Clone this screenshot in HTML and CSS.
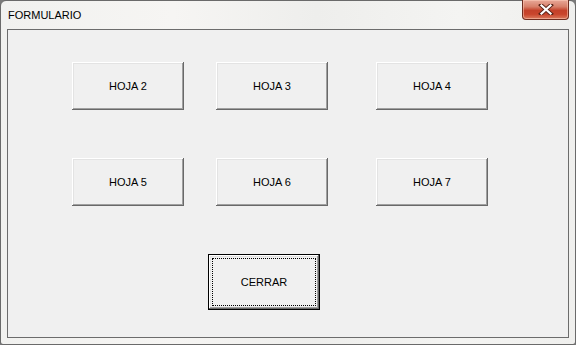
FILE: index.html
```html
<!DOCTYPE html>
<html lang="es">

<head>
    <meta charset="UTF-8">
    <meta name="viewport" content="width=device-width, initial-scale=1.0">
    <title>FORMULARIO</title>
    <link rel="stylesheet" href="styles.css">
</head>

<body>

    <div class="window">
        <div class="title-bar">
            <span class="title">FORMULARIO</span>
            <button class="close-btn" title="Cerrar">
                <svg width="16" height="11" viewBox="0 0 16 11">
                    <path d="M3 1 L13 10 M13 1 L3 10" stroke="#5a2418" stroke-width="4" stroke-linecap="square" />
                    <path d="M3.5 1.5 L12.5 9.5 M12.5 1.5 L3.5 9.5" stroke="#ffffff" stroke-width="2.2" stroke-linecap="square" />
                </svg>
            </button>
        </div>

        <div class="client">
            <div class="btn-row">
                <button class="sheet-btn">HOJA 2</button>
                <button class="sheet-btn col-2">HOJA 3</button>
                <button class="sheet-btn col-3">HOJA 4</button>
            </div>
            <div class="btn-row">
                <button class="sheet-btn">HOJA 5</button>
                <button class="sheet-btn col-2">HOJA 6</button>
                <button class="sheet-btn col-3">HOJA 7</button>
            </div>
            <div class="close-row">
                <button class="sheet-btn default-btn">CERRAR</button>
            </div>
        </div>
    </div>

</body>

</html>
```

FILE: styles.css
```css
body {
    margin: 0;
    font-family: "Liberation Sans", Arial, sans-serif;
    font-size: 11px;
    background-color: #7a7a7a;
}

.window {
    width: 576px;
    height: 345px;
    box-sizing: border-box;
    border: 1px solid #6a6a6a;
    border-radius: 6px 6px 3px 3px;
    background: linear-gradient(90deg, #f1f1ef 0%, #f6f5f3 30%, #eeeeec 55%, #f4f4f2 80%, #efefed 100%);
    padding: 0 6px 6px 6px;
    display: flex;
    flex-direction: column;
}

.title-bar {
    height: 28px;
    display: flex;
    align-items: flex-start;
    justify-content: space-between;
}

.title {
    margin-top: 8px;
    margin-left: 1px;
    color: #000;
    font-size: 11px;
}

.close-btn {
    width: 47px;
    height: 20px;
    margin-top: -1px;
    margin-right: 0;
    padding: 0;
    border: 1px solid #6e2d20;
    border-top: none;
    border-radius: 0 0 4px 4px;
    background: linear-gradient(180deg, #e8a898 0%, #d7806a 35%, #c4412a 55%, #c9452c 75%, #db7a5e 100%);
    box-shadow: inset 0 0 0 1px rgba(255, 210, 190, 0.5);
    display: flex;
    align-items: center;
    justify-content: center;
    cursor: pointer;
}

.client {
    flex: 1;
    border: 1px solid #6c6c6c;
    background-color: #f0f0f0;
    padding-top: 32px;
    padding-left: 64px;
}

.btn-row {
    display: flex;
    margin-bottom: 48px;
}

.sheet-btn {
    width: 112px;
    height: 48px;
    padding: 0;
    border: none;
    background-color: #f0f0f0;
    font-family: "Liberation Sans", Arial, sans-serif;
    font-size: 11px;
    color: #000;
    box-shadow: inset -1px -1px #696969, inset 1px 1px #ffffff, inset -2px -2px #a0a0a0, inset 2px 2px #e3e3e3;
    cursor: pointer;
}

.col-2 {
    margin-left: 32px;
}

.col-3 {
    margin-left: 48px;
}

.close-row {
    padding-left: 136px;
}

.default-btn {
    position: relative;
    height: 56px;
    border: 1px solid #000;
    box-shadow: inset -1px -1px #696969, inset 1px 1px #ffffff, inset -2px -2px #a0a0a0, inset 2px 2px #e3e3e3;
}

.default-btn::after {
    content: "";
    position: absolute;
    top: 3px;
    left: 3px;
    right: 3px;
    bottom: 3px;
    border: 1px dotted #000;
}
```
